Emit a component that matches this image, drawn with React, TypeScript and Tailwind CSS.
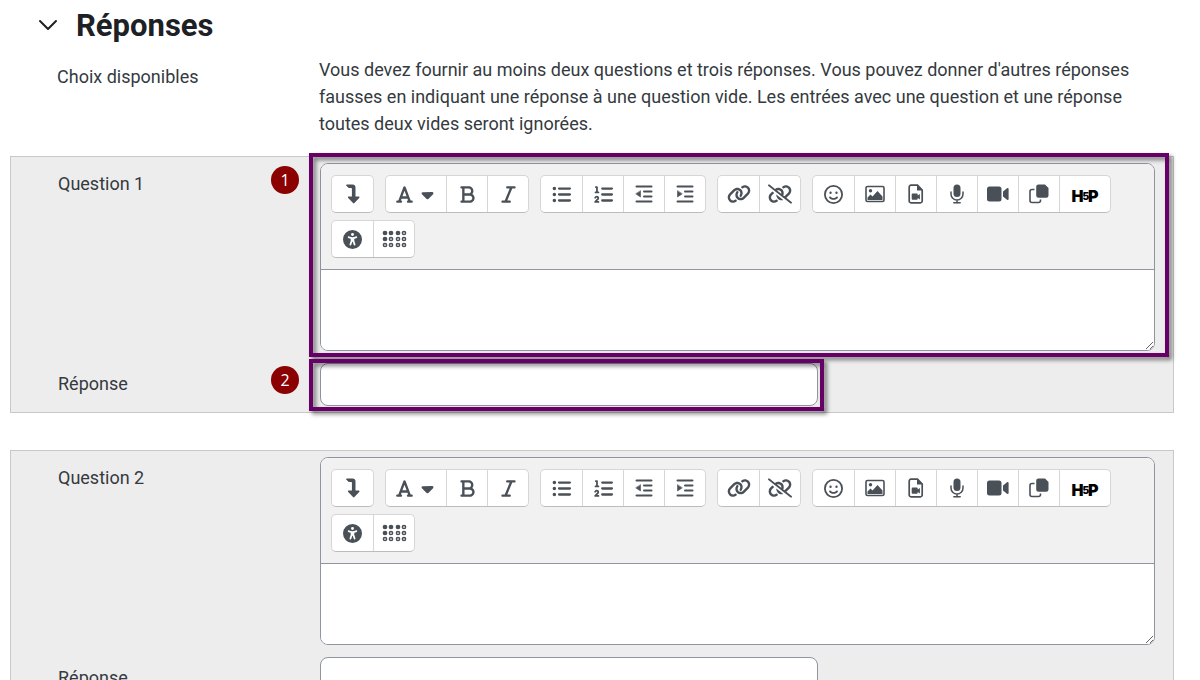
import type { ReactNode } from 'react';
import clsx from 'clsx';
import { ChevronDown } from 'lucide-react';
import {
    FaBold,
    FaCaretDown,
    FaFont,
    FaItalic,
    FaLink,
    FaLinkSlash,
    FaListOl,
    FaListUl,
    FaRegFaceSmile,
    FaUniversalAccess,
} from 'react-icons/fa6';

interface Tool {
    label: string;
    icon: ReactNode;
    size?: 'wide' | 'medium';
}

interface FieldLabelProps {
    htmlFor: string;
    badge?: number;
    children: ReactNode;
}

interface QuestionBlockProps {
    number: number;
    highlighted?: boolean;
}

const ArrowTurnDown = () => (
    <svg width="14" height="20" viewBox="0 0 14 20" fill="currentColor">
        <path d="M1 .5H6.500a3 3 0 0 1 3 3v9h3c.9 0 1.300 1 .7 1.600l-4.800 5a1 1 0 0 1-1.400 0l-4.800-5c-.6-.6-.2-1.600.7-1.600h3V4.500c0-.4-.2-.6-.6-.6H2.700L.2 1.600C-.2 1.100.2.5 1 .5Z" />
    </svg>
);

const IndentLines = ({ outdent = false }: { outdent?: boolean }) => (
    <svg width="18" height="18" viewBox="0 0 18 18" fill="none" stroke="currentColor" strokeWidth="2" strokeLinecap="round">
        <path d="M1.500 1.500h15M9 6.500h7.500M9 11.500h7.500M1.500 16.500h15" />
        <path d={outdent ? 'M5.500 6v6L1 9Z' : 'M1.500 6v6L6 9Z'} fill="currentColor" strokeWidth="0.600" />
    </svg>
);

const Picture = () => (
    <svg width="20" height="18" viewBox="0 0 20 18" fill="currentColor">
        <rect x="1" y="1.500" width="18" height="15" rx="1.500" fill="none" stroke="currentColor" strokeWidth="1.600" />
        <circle cx="5.500" cy="5.800" r="1.700" />
        <path d="M2.500 15v-2.500l3-3 2 2L12.500 6l5 5.500V15Z" />
    </svg>
);

const FileVideo = () => (
    <svg width="16" height="20" viewBox="0 0 16 20" fill="currentColor">
        <path d="M3 1.200h6.500L14.200 6v11a1.800 1.800 0 0 1-1.800 1.800H3A1.800 1.800 0 0 1 1.200 17V3A1.800 1.800 0 0 1 3 1.200Z" fill="none" stroke="currentColor" strokeWidth="1.700" />
        <path d="M9 1v5.500h5.500ZM4.600 9.500h4.200a.9.9 0 0 1 .9.900v1l2.200-1.500v5.700l-2.200-1.500v.7a.9.9 0 0 1-.9.9H4.600a.9.9 0 0 1-.9-.9v-4.400a.9.9 0 0 1 .9-.9Z" />
    </svg>
);

const Microphone = () => (
    <svg width="14" height="20" viewBox="0 0 14 20" fill="currentColor">
        <rect x="3.500" y="0.500" width="7" height="12.500" rx="3.500" />
        <path d="M1 8v2a6 6 0 0 0 12 0V8M7 16v3M3.800 18.700h6.400" fill="none" stroke="currentColor" strokeWidth="1.500" strokeLinecap="round" />
    </svg>
);

const VideoCamera = () => (
    <svg width="22" height="16" viewBox="0 0 22 16" fill="currentColor">
        <rect x="0" y="0.500" width="14.500" height="15" rx="2.500" />
        <path d="M16 5.500l4-3.300c.8-.6 1.600-.2 1.600.7v10.200c0 .9-.8 1.300-1.600.7l-4-3.300Z" />
    </svg>
);

const ManageFiles = () => (
    <svg width="20" height="20" viewBox="0 0 20 20">
        <path d="M5.500 5.500H3a2 2 0 0 0-2 2V16.500a2 2 0 0 0 2 2h6.500a2 2 0 0 0 2-2V15.500" fill="none" stroke="currentColor" strokeWidth="1.600" />
        <path d="M9.500.5H16L19.500 4v7.500a2.300 2.300 0 0 1-2.300 2.300H9.500a2.300 2.300 0 0 1-2.300-2.300V2.800A2.300 2.300 0 0 1 9.500.5Z" fill="currentColor" />
    </svg>
);

const brailleDots = [
    [3, 3, true], [9, 3, true], [16, 3, true], [22, 3, false],
    [3, 9, true], [9, 9, false], [16, 9, false], [22, 9, false],
    [3, 15, false], [9, 15, false], [16, 15, false], [22, 15, false],
] as const;

const Braille = () => (
    <svg width="25" height="18" viewBox="0 0 25 18" stroke="currentColor" strokeWidth="1.500">
        {brailleDots.map(([cx, cy, filled]) => (
            <circle key={`${cx}-${cy}`} cx={cx} cy={cy} r="1.600" fill={filled ? 'currentColor' : 'none'} />
        ))}
    </svg>
);

const H5PLogo = () => (
    <span className="flex items-center pt-1 font-[Inter,sans-serif] text-base leading-none font-black text-black">
        H<span className="-mx-px text-[10px]">5</span>P
    </span>
);

const toolGroups: Tool[][] = [
    [{ label: 'Afficher plus de boutons', icon: <ArrowTurnDown /> }],
    [
        {
            label: 'Styles de paragraphe',
            icon: <><FaFont size={19} /><FaCaretDown size={19} /></>,
            size: 'wide',
        },
        { label: 'Gras', icon: <FaBold size={19} /> },
        { label: 'Italique', icon: <FaItalic size={19} /> },
    ],
    [
        { label: 'Liste non ordonnée', icon: <FaListUl size={19} /> },
        { label: 'Liste ordonnée', icon: <FaListOl size={19} /> },
        { label: 'Diminuer le retrait', icon: <IndentLines outdent /> },
        { label: 'Augmenter le retrait', icon: <IndentLines /> },
    ],
    [
        { label: 'Lien', icon: <FaLink size={24} /> },
        { label: 'Supprimer le lien', icon: <FaLinkSlash size={24} /> },
    ],
    [
        { label: 'Émoticônes', icon: <FaRegFaceSmile size={19} /> },
        { label: 'Image', icon: <Picture /> },
        { label: 'Média', icon: <FileVideo /> },
        { label: 'Enregistrer le son', icon: <Microphone /> },
        { label: 'Enregistrer une vidéo', icon: <VideoCamera /> },
        { label: 'Gérer les fichiers', icon: <ManageFiles /> },
        { label: 'Insérer H5P', icon: <H5PLogo />, size: 'medium' },
    ],
    [
        { label: "Vérificateur d'accessibilité", icon: <FaUniversalAccess size={19} /> },
        { label: "Assistant lecteur d'écran", icon: <Braille /> },
    ],
];

function Toolbar() {
    return (
        <div className="flex flex-wrap gap-x-[11px] gap-y-[7px] border-b border-[#8f959e] bg-[#f1f1f1] px-[10px] py-[11px]">
            {toolGroups.map((group, index) => (
                <div key={index} className="flex overflow-hidden rounded-[5px] border border-[#d6d6d6] border-b-[#bcbcbc] bg-white">
                    {group.map(({ label, icon, size }, i) => (
                        <button
                            key={label}
                            type="button"
                            aria-label={label}
                            className={clsx(
                                'flex h-9 items-center justify-center gap-1 text-[#495057] hover:bg-gray-100',
                                size === 'wide' ? 'w-[60px]' : size === 'medium' ? 'w-[51px]' : 'w-[41px]',
                                i > 0 && 'border-l border-[#d6d6d6]',
                            )}
                        >
                            {icon}
                        </button>
                    ))}
                </div>
            ))}
        </div>
    );
}

function FieldLabel({ htmlFor, badge, children }: FieldLabelProps) {
    return (
        <div className="relative mt-[7px] self-start">
            <label htmlFor={htmlFor}>{children}</label>
            {badge && (
                <span className="absolute -top-1 right-[21px] flex size-7 items-center justify-center rounded-full bg-[#8b0000] font-['Open_Sans',sans-serif] text-base text-white">
                    {badge}
                </span>
            )}
        </div>
    );
}

const Highlight = ({ className }: { className: string }) => (
    <div className={clsx('pointer-events-none absolute border-4 border-[#660066] drop-shadow-[3px_3px_2px_rgba(0,0,0,0.5)]', className)} />
);

function QuestionBlock({ number, highlighted = false }: QuestionBlockProps) {
    const questionId = `question-${number}`;
    const answerId = `answer-${number}`;

    return (
        <section className="grid grid-cols-[262px_minmax(0,1fr)] gap-y-3 border border-[#c8c8c8] bg-[#ededed] py-[6px] pr-[18px] pl-[47px]">
            <FieldLabel htmlFor={questionId} badge={highlighted ? 1 : undefined}>Question {number}</FieldLabel>
            <div className="relative">
                <div className="overflow-hidden rounded-lg border border-[#8f959e] bg-white">
                    <Toolbar />
                    <textarea id={questionId} className="block h-20 w-full resize-y bg-white px-3 py-2 outline-none" />
                </div>
                {highlighted && <Highlight className="-top-[10px] -right-[14px] -bottom-[6px] -left-[11px]" />}
            </div>

            <FieldLabel htmlFor={answerId} badge={highlighted ? 2 : undefined}>Réponse</FieldLabel>
            <div className="relative w-full max-w-[498px]">
                <input id={answerId} type="text" className="block h-[43px] w-full rounded-lg border border-[#8f959e] bg-white px-3 outline-none" />
                {highlighted && <Highlight className="-top-1 -right-[6px] -bottom-[5px] -left-[11px]" />}
            </div>
        </section>
    );
}

export default function App() {
    return (
        <main className="h-screen overflow-hidden bg-white pr-[26px] pl-[10px] font-[Roboto,sans-serif] text-lg leading-[27px] text-[#343a40]">
            <h2 className="flex h-14 items-center pb-[6px] pl-[22px] text-[31px] font-bold text-[#1d2125]">
                <button type="button" aria-label="Replier la section Réponses" className="mr-3">
                    <ChevronDown size={32} strokeWidth={1.5} />
                </button>
                Réponses
            </h2>

            <div className="mb-[19px] grid grid-cols-[262px_minmax(0,1fr)] pr-[19px] pl-[47px]">
                <div className="pt-[7px]">Choix disponibles</div>
                <p>
                    Vous devez fournir au moins deux questions et trois réponses. Vous pouvez donner d'autres réponses
                    fausses en indiquant une réponse à une question vide. Les entrées avec une question et une réponse
                    toutes deux vides seront ignorées.
                </p>
            </div>

            <div className="flex flex-col gap-[37px]">
                {[1, 2].map(number => (
                    <QuestionBlock key={number} number={number} highlighted={number === 1} />
                ))}
            </div>
        </main>
    );
}
